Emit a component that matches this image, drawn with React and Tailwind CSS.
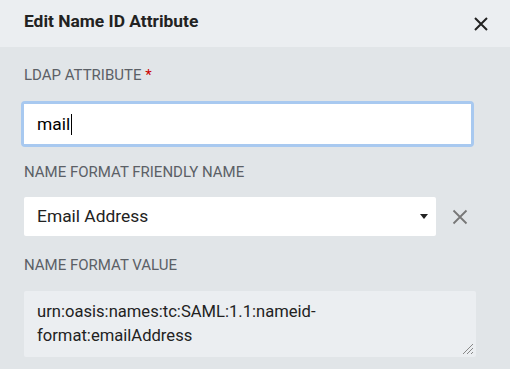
import React from "react";

export default function App() {
  return (
    <div className="w-[510px] h-[369px] overflow-hidden bg-[#e1e5e8] font-['Roboto',sans-serif]">
      <div className="h-[47px] bg-[#ebeef1] flex items-center justify-between pl-[24px] pr-[20px]">
        <h1 className="text-[17.4px] font-bold text-[#222] -mt-[4px]">Edit Name ID Attribute</h1>
        <svg width="18" height="18" viewBox="0 0 18 18" className="text-[#222]">
          <path d="M3 3 L15 15 M15 3 L3 15" stroke="currentColor" strokeWidth="2" />
        </svg>
      </div>
      <div className="px-[24px] pt-[20px]">
        <label className="block text-[15px] text-[#5b6066] leading-[16px]">
          LDAP ATTRIBUTE <span className="text-[#c00]">*</span>
        </label>
        <div className="mt-[18px] w-[453px] -ml-[3px] rounded-[4px] border-[3px] border-[#a8c9f0]">
          <div className="h-[40px] bg-white flex items-center pl-[13px] text-[17.4px] text-black">
            mail<span className="inline-block w-px h-[21px] bg-black ml-[1px]" />
          </div>
        </div>
        <label className="block mt-[17px] text-[15px] text-[#5b6066] leading-[16px]">
          NAME FORMAT FRIENDLY NAME
        </label>
        <div className="mt-[17px] flex items-center">
          <div className="w-[412px] h-[39px] bg-white rounded-[2px] flex items-center justify-between pl-[13px] pr-[8px] text-[17.4px] text-[#222]">
            <span>Email Address</span>
            <svg width="8" height="5" viewBox="0 0 8 5"><path d="M0 0 H8 L4 5 Z" fill="#222" /></svg>
          </div>
          <svg width="16" height="16" viewBox="0 0 16 16" className="ml-[16px] text-[#777]">
            <path d="M1.5 1.5 L14.5 14.5 M14.5 1.5 L1.5 14.5" stroke="currentColor" strokeWidth="1.8" />
          </svg>
        </div>
        <label className="block mt-[21px] text-[15px] text-[#5b6066] leading-[16px]">
          NAME FORMAT VALUE
        </label>
        <div className="relative mt-[18px] w-[452px] h-[66px] bg-[#ebeef1] rounded-[2px] pl-[13px] pr-[30px] pt-[9px] text-[16.6px] leading-[24px] text-[#222]">
          urn:oasis:names:tc:SAML:1.1:nameid-format:emailAddress
          <svg width="12" height="12" viewBox="0 0 12 12" className="absolute right-[2px] bottom-[2px]">
            <path d="M11 1 L1 11 M11 5 L5 11 M11 9 L9 11" stroke="#888" strokeWidth="1" />
          </svg>
        </div>
      </div>
    </div>
  );
}
